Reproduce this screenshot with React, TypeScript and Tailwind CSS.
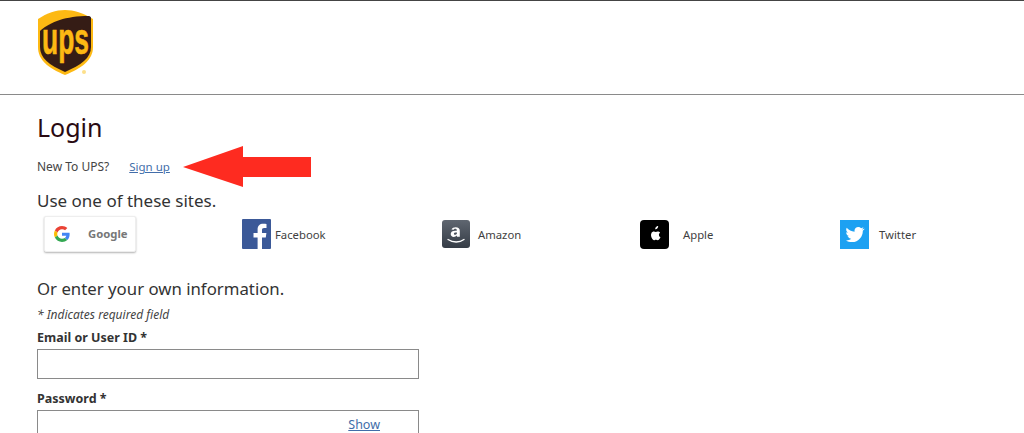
import React from "react";

const font = { fontFamily: '"Noto Sans", "Open Sans", sans-serif' };

function UpsLogo() {
  return (
    <svg width="58" height="70" viewBox="0 0 58 70" className="block overflow-visible">
      <path d="M1 9 C10 3 19 0 28 0 C37 0 46 3 56 9 V37 C56 50 45 58 28 65 C11 58 1 50 1 37 Z" fill="#fdb913" />
      <path d="M4 20 C14 12 28 6 52 6 C53 6 54 7 54 8 V37 C54 48 44 55 28 62 C12 55 3 48 3 37 V21 Z" fill="#351c15" />
      <text x="28.5" y="44" textAnchor="middle" fill="#fdb913" stroke="#fdb913" strokeWidth="0.6" fontSize="44" fontWeight="700" fontFamily="'Liberation Sans Narrow','Liberation Sans',sans-serif" textLength="47" lengthAdjust="spacingAndGlyphs">ups</text>
      <circle cx="47" cy="62" r="2" fill="#fde08a" />
    </svg>
  );
}

function GoogleG() {
  return (
    <svg width="16" height="16" viewBox="0 0 48 48">
      <path fill="#EA4335" d="M24 9.5c3.5 0 6.7 1.3 9.2 3.6l6.9-6.9C35.9 2.4 30.5 0 24 0 14.6 0 6.5 5.4 2.6 13.2l8 6.2C12.5 13.7 17.800 9.500 24 9.500z" />
      <path fill="#4285F4" d="M46.900 24.500c0-1.600-.1-3.100-.4-4.500H24v9h12.900c-.6 3-2.200 5.500-4.700 7.200l7.700 6c4.500-4.200 7-10.300 7-17.700z" />
      <path fill="#FBBC05" d="M10.500 28.600c-.5-1.400-.8-3-.8-4.600s.3-3.200.8-4.600l-8-6.200C.9 16.500 0 20.100 0 24s.9 7.500 2.600 10.800l7.900-6.200z" />
      <path fill="#34A853" d="M24 48c6.500 0 11.900-2.100 15.900-5.800l-7.700-6c-2.100 1.400-4.900 2.300-8.200 2.300-6.200 0-11.500-4.200-13.400-9.900l-8 6.200C6.500 42.600 14.600 48 24 48z" />
    </svg>
  );
}

function Social({ w, label, gap, children }: { w: string; label: string; gap: string; children: React.ReactNode }) {
  return (
    <div className={`flex items-center ${w}`}>
      {children}
      <span className={`mt-[2px] text-[11.300px] text-[#3f3f3f] ${gap}`}>{label}</span>
    </div>
  );
}

export default function App() {
  return (
    <div className="h-[433px] overflow-hidden bg-white text-[#333]" style={font}>
      <header className="h-[95px] border-t border-b border-t-[#444] border-b-[#8a8a8a] pl-[37px] pt-[9px]">
        <UpsLogo />
      </header>
      <main className="pl-[37px]">
        <h1 className="mt-[13px] h-[38px] text-[25px] leading-[38px] text-[#2a0a12]">Login</h1>
        <div className="relative mt-[12px] flex h-[18px] items-center text-[12px]">
          <span className="text-[#444]">New To UPS?</span>
          <a className="ml-[20px] text-[11.500px] text-[#426da9] underline">Sign up</a>
          <svg width="128" height="41" viewBox="0 0 128 41" className="absolute left-[146px] top-[-12px]">
            <path d="M0 21 L60 0 V11 H128 V31 H60 V41 Z" fill="#fe2b20" />
          </svg>
        </div>
        <h2 className="mt-[13px] h-[24px] text-[17px] leading-[24px] text-[#333]">Use one of these sites.</h2>
        <div className="mt-[1px] flex h-[40px] items-center pl-[7px]">
          <div className="w-[198px]">
            <div className="flex h-[36px] w-[92px] items-center rounded-[2px] border border-[#eee] bg-white pl-[9px] shadow-[0_1px_2px_rgba(0,0,0,0.3)]">
              <GoogleG />
              <span className="ml-[18px] text-[11.300px] font-bold text-[#777]">Google</span>
            </div>
          </div>
          <Social w="w-[200px]" label="Facebook" gap="ml-[4px]">
            <svg width="29" height="30" viewBox="0 0 29 30">
              <rect width="29" height="30" rx="1" fill="#3b5998" />
              <path d="M20 30V18.500h3.800l.6-4.500H20v-2.800c0-1.300.4-2.200 2.200-2.200h2.300V5c-.4-.1-1.800-.2-3.300-.2-3.300 0-5.600 2-5.600 5.800V14H11.500v4.500h4.100V30z" fill="#fff" />
            </svg>
          </Social>
          <Social w="w-[198px]" label="Amazon" gap="ml-[8px]">
            <svg width="28" height="28" viewBox="0 0 28 28">
              <defs>
                <linearGradient id="az" x1="0" y1="0" x2="0" y2="1">
                  <stop offset="0" stopColor="#5f6670" />
                  <stop offset="1" stopColor="#353c46" />
                </linearGradient>
              </defs>
              <rect width="28" height="28" rx="3" fill="url(#az)" />
              <path d="M9.500 9.500c.7-1.500 2.300-2.200 4.200-2.200 2.700 0 4.100 1.300 4.100 3.600v5.800h-2.800l-.2-1.100c-.8.900-1.800 1.300-3 1.300-1.900 0-3.100-1.200-3.100-2.900 0-2.100 1.700-3.300 4.800-3.300h1.300v-.5c0-1-.5-1.500-1.500-1.500-.9 0-1.400.4-1.700 1.100zM15 12.400h-1c-1.400 0-2.100.5-2.100 1.300 0 .7.500 1.100 1.200 1.100.9 0 1.900-.6 1.900-1.500z" fill="#fff" />
              <path d="M6 19.500c5 3.300 11.500 3.300 16 0" stroke="#fff" strokeWidth="1.300" fill="none" strokeLinecap="round" />
            </svg>
          </Social>
          <Social w="w-[200px]" label="Apple" gap="ml-[14px]">
            <svg width="29" height="29" viewBox="0 0 29 29">
              <rect width="29" height="29" rx="4" fill="#000" />
              <path d="M17.400 8.300c.5-.7.900-1.500.8-2.300-.8 0-1.700.5-2.200 1.100-.5.600-.9 1.400-.8 2.200.8.100 1.700-.4 2.200-1zM18.900 14.800c0-1.400 1.100-2 1.200-2.100-.7-1-1.700-1.100-2.100-1.100-.9-.1-1.700.5-2.200.5s-1.200-.5-1.900-.5c-1 0-1.900.6-2.400 1.400-1 1.800-.3 4.400.7 5.800.5.700 1.100 1.500 1.800 1.500s1-.5 1.900-.5 1.100.5 1.900.4c.8 0 1.300-.7 1.800-1.400.6-.8.800-1.600.8-1.600s-1.500-.6-1.500-2.400z" fill="#fff" />
            </svg>
          </Social>
          <Social w="w-[160px]" label="Twitter" gap="ml-[10px]">
            <svg width="29" height="29" viewBox="0 0 29 29">
              <rect width="29" height="29" fill="#1da1f2" />
              <path d="M24 8.800c-.7.300-1.400.5-2.200.6.800-.5 1.400-1.200 1.700-2.100-.7.400-1.600.8-2.400.9-.7-.8-1.700-1.200-2.800-1.200-2.100 0-3.800 1.700-3.800 3.800 0 .3 0 .6.100.9-3.200-.2-6-1.700-7.900-4-.3.6-.5 1.200-.5 1.900 0 1.300.7 2.500 1.700 3.200-.6 0-1.200-.2-1.700-.5v.1c0 1.800 1.300 3.400 3.100 3.700-.3.100-.7.100-1 .1-.2 0-.5 0-.7-.1.5 1.500 1.900 2.600 3.600 2.600-1.300 1-3 1.700-4.800 1.700H6c1.700 1.100 3.700 1.700 5.900 1.700 7 0 10.900-5.800 10.900-10.900v-.5c.7-.5 1.400-1.200 1.900-2z" fill="#fff" />
            </svg>
          </Social>
        </div>
        <h2 className="mt-[23px] h-[24px] text-[16.800px] leading-[24px] text-[#333]">Or enter your own information.</h2>
        <p className="mt-[5px] h-[18px] text-[12px] leading-[18px] italic text-[#444]">* Indicates required field</p>
        <label className="mt-[5px] block h-[18px] text-[12.500px] font-bold leading-[18px] text-[#333]">Email or User ID *</label>
        <input className="mt-[2px] block h-[30px] w-[382px] border border-[#8a8a8a] bg-white" aria-label="Email or User ID" />
        <label className="mt-[11px] block h-[18px] text-[12.500px] font-bold leading-[18px] text-[#333]">Password *</label>
        <div className="mt-[2px] flex h-[30px] w-[382px] items-center justify-end border border-[#8a8a8a] pr-[38px]">
          <a className="text-[12.500px] text-[#426da9] underline">Show</a>
        </div>
      </main>
    </div>
  );
}
